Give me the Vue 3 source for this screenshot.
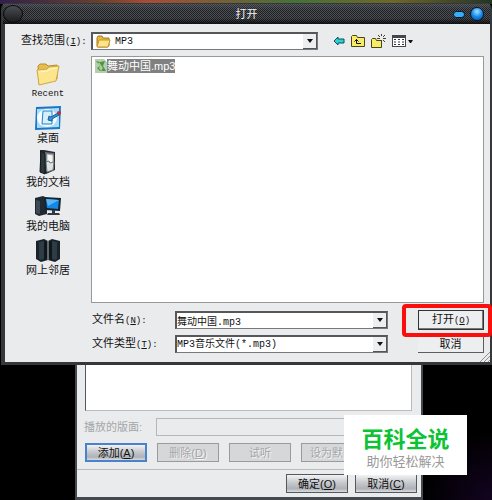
<script setup>
import { ref } from 'vue'

const fileName = ref('舞动中国.mp3')
const places = [
  { id: 'recent', label: 'Recent', latin: true },
  { id: 'desktop', label: '桌面' },
  { id: 'documents', label: '我的文档' },
  { id: 'computer', label: '我的电脑' },
  { id: 'network', label: '网上邻居' }
]
</script>

<template>
  <div class="desktop">
    <section class="dialog">
      <header class="titlebar">
        <span class="orb"></span>
        <h1>打开</h1>
        <span class="window-buttons">
          <button class="minimize" aria-label="最小化"></button>
          <button class="close" aria-label="关闭"></button>
        </span>
      </header>

      <div class="dialog-body">
        <div class="look-in">
          <label for="folder">查找范围<span class="key">(<u>I</u>):</span></label>
          <div class="combo folder-combo">
            <svg class="combo-icon" width="15" height="13" viewBox="0 0 15 13">
              <path d="M1 11V3l1-2h4l1 2h6v8l-2 1H2z" fill="#e8b93c" stroke="#a77b18" />
              <path d="M3 5h11l-2 7H1z" fill="#fce58c" stroke="#c4962a" />
            </svg>
            <select id="folder">
              <option>MP3</option>
            </select>
            <span class="arrow"></span>
          </div>
          <div class="toolbar">
            <button aria-label="后退">
              <svg width="12" height="12" viewBox="0 0 12 12">
                <path d="M1 6l4-4v2h6v4H5v2z" fill="#25d5d2" stroke="#114e58" />
              </svg>
            </button>
            <button aria-label="向上一级">
              <svg width="14" height="12" viewBox="0 0 14 12">
                <path d="M.5 11.5v-10l1-1h4l1 2h7v9z" fill="#f7ec68" stroke="#4a4614" />
                <path d="M5.500 4v4.500H10M3.500 6.500l2-2 2 2" fill="none" stroke="#111" />
              </svg>
            </button>
            <button aria-label="新建文件夹">
              <svg width="15" height="14" viewBox="0 0 15 14">
                <path d="M.5 13.500v-8l1-1h3l1 2h5v7z" fill="#f7ec68" stroke="#4a4614" />
                <path d="M10.500 0v2M10.500 6v3M6 4.500h3M12 4.500h3M7 1l2 2M14 1l-2 2M14 8l-2-2" stroke="#44422a" />
              </svg>
            </button>
            <button aria-label="查看">
              <svg width="21" height="12" viewBox="0 0 21 12">
                <path d="M0 0h14v12H0z" fill="#44464e" />
                <path d="M1 3h12v8H1z" fill="#fff" />
                <path d="M2 4.500h2M6 4.500h2M10 4.500h2M2 7h2M6 7h2M10 7h2M2 9.500h2M6 9.500h2M10 9.500h2" stroke="#333" />
                <path d="M16 5h5l-2 3h-1z" fill="#111" />
              </svg>
            </button>
          </div>
        </div>

        <div class="browser">
          <nav class="places">
            <button v-for="place in places" :key="place.id" class="place">
              <svg v-if="place.id === 'recent'" width="26" height="26" viewBox="0 0 26 26">
                <path d="M3 5l2-2h6l2 2 9-1v14L4 23z" fill="#e6bd50" stroke="#b98d2c" />
                <path d="M2 9l10-1 2-2 10-1-3 15-17 4z" fill="#fbe58d" stroke="#d2a740" />
                <path d="M4 11l9-1 2-2 7-1" fill="none" stroke="#fff7cd" />
              </svg>
              <svg v-else-if="place.id === 'desktop'" width="28" height="26" viewBox="0 0 28 26">
                <path d="M2 2l25-1-1 23-25 1z" fill="#1976ca" />
                <path d="M3 4l22-1v19L3 23z" fill="#a8dcf7" />
                <ellipse cx="13" cy="13" rx="10" ry="9" fill="#f5fbff" />
                <path d="M9 6h9v13H8z" fill="#d7eefb" stroke="#2082cb" />
                <path d="M14 15l1-4 2 1 7-4 1 2-7 4v2z" fill="#3694d4" stroke="#195f9d" />
                <circle cx="25" cy="8" r="2" fill="#b82d42" />
              </svg>
              <svg v-else-if="place.id === 'documents'" width="24" height="26" viewBox="0 0 24 26">
                <path d="M4 1l4 0 11 2v18l-9 4-6-2z" fill="#242b31" />
                <path d="M9 3l9 1v16l-8 2z" fill="#657078" />
                <path d="M11 5l6 1v13l-6-1z" fill="#f4f4f0" stroke="#aaa" />
                <path d="M10 13l3-1 1 2 4-1-1 8-6 2z" fill="#dfe2e3" stroke="#6e777d" />
                <path d="M5 2l4 3v20l-5-2z" fill="#2d373e" stroke="#141a1e" />
              </svg>
              <svg v-else-if="place.id === 'computer'" width="28" height="26" viewBox="0 0 28 26">
                <path d="M1 5l8-2 4 2v16l-8 2-4-2z" fill="#202930" />
                <path d="M2 7l4 1v13l-4-1z" fill="#3b4a54" />
                <path d="M10 4l17 1-1 13-15-1z" fill="#17232d" />
                <path d="M12 6l13 1-1 9-11-1z" fill="#1687e5" />
                <path d="M12 6l13 1-11 6z" fill="#56b6fa" />
                <path d="M18 17h3v3h4l1 2H13l1-2h4z" fill="#303a42" />
              </svg>
              <svg v-else width="26" height="26" viewBox="0 0 26 26">
                <path d="M1 4l8-2 4 2v19l-7 2-5-3z" fill="#1b2228" />
                <path d="M25 4l-8-2-4 2v19l7 2 5-3z" fill="#1b2228" />
                <path d="M4 5l5-1v18l-4 1-1-2zM22 5l-5-1v18l4 1 1-2z" fill="#2c3d46" />
                <path d="M9 4l3 1v17l-3 1zM17 4l-3 1v17l3 1z" fill="#0f171c" />
                <path d="M13 4v19" stroke="#a9b1b6" />
              </svg>
              <span :class="{ recent: place.latin }">{{ place.label }}</span>
            </button>
          </nav>
          <div class="file-list">
            <button class="file">
              <svg width="13" height="14" viewBox="0 0 13 14">
                <path d="M1 0h9l3 3v11H1z" fill="#b5cfae" />
                <path d="M2 2l4 1 5-1-2 5 3 5H6L3 9l3-2z" fill="#519541" />
                <path d="M5 3l2 3 2 3-2 3-2-3 1-2-2-2z" fill="#a9cba0" />
              </svg>
              <span>舞动中国.mp3</span>
            </button>
          </div>
        </div>

        <form class="file-form" @submit.prevent>
          <label for="name">文件名<span class="key">(<u>N</u>):</span></label>
          <div class="combo">
            <input id="name" v-model="fileName" type="text" />
            <span class="arrow"></span>
          </div>
          <div class="open-cell">
            <button class="classic default">打开<span class="key">(<u>O</u>)</span></button>
            <span class="highlight"></span>
          </div>
          <label for="type">文件类型<span class="key">(<u>T</u>):</span></label>
          <div class="combo">
            <select id="type">
              <option>MP3音乐文件(*.mp3)</option>
            </select>
            <span class="arrow"></span>
          </div>
          <button type="button" class="classic cancel">取消</button>
        </form>
        <svg class="grip" width="10" height="10" viewBox="0 0 10 10">
          <path d="M0 10L10 0M4 10l6-6M8 10l2-2" stroke="#8d8f91" />
        </svg>
      </div>
    </section>

    <section class="settings">
      <div class="play-list"></div>
      <div class="layout-row">
        <label for="layout">播放的版面:</label>
        <input id="layout" type="text" disabled />
      </div>
      <div class="actions">
        <button class="silver focused">添加(<u>A</u>)</button>
        <button class="silver" disabled>删除(<u>D</u>)</button>
        <button class="silver" disabled>试听</button>
        <button class="silver" disabled>设为默认</button>
      </div>
      <footer>
        <button class="silver">确定(<u>O</u>)</button>
        <button class="silver">取消(<u>C</u>)</button>
      </footer>
    </section>

    <aside class="brand">
      <strong>百科全说</strong>
      <span>助你轻松解决</span>
    </aside>
  </div>
</template>

<style>
body {
  margin: 0;
  background: #000;
}
</style>

<style scoped>
* {
  box-sizing: border-box;
}

.desktop {
  position: relative;
  min-height: 100vh;
  padding: 3px 0 0 1px;
  overflow: hidden;
  background: linear-gradient(90deg, #30204a, #68402c 20%, #a64d36 30%, #467137 60%, #6f6629 80%, #243524) top / 100% 4px no-repeat,
    radial-gradient(circle at 100% 100%, #130420, #000 70px);
  color: #111;
  font-family: 'Liberation Sans', 'Noto Sans CJK SC', sans-serif;
  font-size: 11px;
  line-height: 14px;
}

button,
input,
select {
  margin: 0;
  padding: 0;
  border: 0;
  border-radius: 0;
  background: none;
  color: inherit;
  font: inherit;
}

svg {
  display: block;
}

.key {
  font-family: 'Liberation Mono', monospace;
  font-size: 9px;
}

.dialog {
  position: relative;
  border: solid #35373b;
  border-width: 1px 2px 3px 4px;
  border-radius: 6px 6px 0 0;
  background: #e9ebed;
}

.titlebar {
  display: flex;
  align-items: center;
  justify-content: space-between;
  height: 20px;
  margin-left: -2px;
  background: linear-gradient(rgba(90, 94, 102, 0.5), transparent 30%, transparent 70%, rgba(0, 0, 0, 0.7)),
    repeating-conic-gradient(#1d1f22 0 25%, #4d5055 0 50%) 0 0 / 2px 2px;
}

.titlebar h1 {
  margin: 0;
  color: #f2f2f2;
  font-size: 11px;
  font-weight: 400;
}

.orb {
  width: 20px;
  height: 18px;
  margin-right: 17px;
  border: 1px solid #08090a;
  border-radius: 50%;
  background: linear-gradient(#4a4d52, #1b1d20);
}

.window-buttons {
  display: flex;
  align-items: center;
  gap: 5px;
  padding-right: 6px;
}

.minimize {
  width: 12px;
  height: 7px;
  border: 1px solid #07182a;
  border-radius: 4px;
  background: #36aefa;
}

.close {
  width: 14px;
  height: 14px;
  border: 1px solid #07182a;
  border-radius: 50%;
  background: radial-gradient(circle at 50% 30%, #a4e4ff, #1689ef 50%, #0851a6);
}

.dialog-body {
  position: relative;
  padding: 8px 6px 9px 0;
}

.look-in {
  display: flex;
  align-items: center;
}

.look-in label {
  width: 86px;
  padding-left: 16px;
}

.combo {
  position: relative;
  display: flex;
  flex: 1;
  min-width: 0;
  height: 18px;
  border: 1px solid #77797b;
  border-top: 2px solid #55575a;
  border-left: 2px solid #55575a;
  background: #fff;
  font-family: 'Liberation Mono', 'Noto Sans CJK SC', monospace;
  font-size: 10px;
}

.combo select,
.combo input {
  flex: 1;
  min-width: 0;
  height: 15px;
  appearance: none;
  outline: 0;
}

.folder-combo select {
  padding-left: 4px;
}

.combo-icon {
  margin: 1px 0 0 3px;
}

.arrow {
  display: flex;
  align-items: center;
  justify-content: center;
  width: 14px;
  border: solid #555;
  border-width: 0 1px 1px 0;
  background: #eceeef;
  pointer-events: none;
}

.arrow::after {
  content: '';
  border: 3px solid transparent;
  border-top: 4px solid #111;
  border-bottom: 0;
}

.toolbar {
  display: flex;
  align-items: center;
  gap: 6px;
  width: 166px;
  padding-left: 15px;
}

.browser {
  display: grid;
  grid-template-columns: 86px 1fr;
  margin-top: 6px;
}

.places {
  display: flex;
  flex-direction: column;
  gap: 4px;
  padding-top: 5px;
}

.place {
  display: flex;
  flex-direction: column;
  align-items: center;
}

.place .recent {
  font-family: 'Liberation Mono', monospace;
  font-size: 9px;
}

.file-list {
  min-height: 247px;
  padding: 2px;
  border: 1px solid #96989a;
  background: #fff;
}

.file {
  display: flex;
  align-items: center;
}

.file span {
  background: #808080;
  color: #fff;
}

.file-form {
  display: grid;
  grid-template-columns: 83px 1fr 66px;
  align-items: center;
  row-gap: 5px;
  margin: 7px 0 0 87px;
}

.file-form .combo {
  margin-right: 30px;
}

.open-cell {
  position: relative;
}

.classic {
  display: block;
  width: 100%;
  height: 18px;
  border: solid #5b5d5f;
  border-width: 0 1px 1px 0;
  background: #eceeef;
}

.classic.default {
  height: 20px;
  border: 1px solid #333;
  box-shadow: inset -1px -1px #777;
}

.highlight {
  position: absolute;
  inset: -6px -8px -7px -16px;
  border: 4px solid #fa0f0c;
  border-radius: 4px;
  pointer-events: none;
}

.grip {
  position: absolute;
  right: 0;
  bottom: 0;
}

.settings {
  margin: 0 69px 0 74px;
  border: solid #46494d;
  border-width: 0 2px 3px;
  background: #e9ebed;
}

.play-list {
  height: 46px;
  margin: 0 9px 0 8px;
  border: solid #bbb;
  border-width: 0 1px 1px 0;
  border-left: 1px solid #55575a;
  background: #fff;
}

.layout-row {
  display: flex;
  align-items: center;
  margin: 7px 5px 0 7px;
}

.layout-row label {
  width: 72px;
  color: #a4a6a8;
}

.layout-row input {
  flex: 1;
  min-width: 0;
  height: 18px;
  border: 1px solid #b5b7b9;
}

.actions {
  display: flex;
  gap: 10px;
  margin: 7px 0 7px 8px;
}

.silver {
  flex: none;
  width: 62px;
  height: 19px;
  border: 1px solid #55585c;
  background: linear-gradient(#f2f3f4, #c6c9cd 45%, #aeb2b8 80%, #d9dbde);
}

.silver.focused {
  border: 2px solid #4a82ce;
}

.silver:disabled {
  border-color: #999b9e;
  background: #d5d7d9;
  color: #a4a6a8;
  text-shadow: 1px 1px #f5f5f5;
}

footer {
  display: flex;
  justify-content: flex-end;
  gap: 7px;
  padding: 4px 4px 4px 0;
  border-top: 1px solid #b9bbbd;
}

.brand {
  position: absolute;
  top: 415px;
  right: 25px;
  display: flex;
  flex-direction: column;
  align-items: center;
  width: 123px;
  height: 60px;
  padding-top: 12px;
  background: #fff;
  color: #999;
  font-size: 13px;
  line-height: 18px;
}

.brand strong {
  color: #0bc334;
  font-size: 22px;
  line-height: 26px;
}
</style>
